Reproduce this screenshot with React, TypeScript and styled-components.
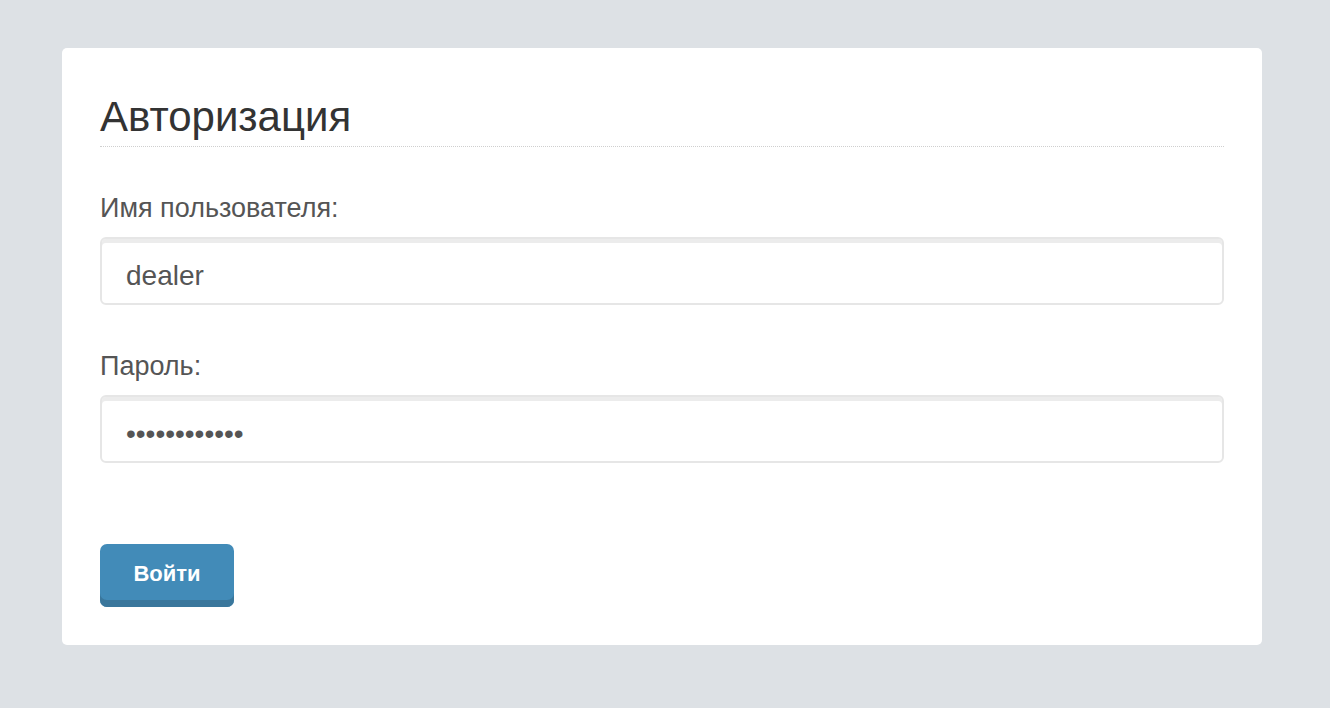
import React from "react";
import styled, { createGlobalStyle } from "styled-components";

const GlobalStyle = createGlobalStyle`
  html, body {
    margin: 0;
    padding: 0;
    background: #dde1e5;
    font-family: "Liberation Sans", Arial, sans-serif;
  }
`;

const Page = styled.div`
  padding: 48px 68px 63px 62px;
`;

const Card = styled.form`
  width: 1200px;
  box-sizing: border-box;
  background: #fff;
  border-radius: 5px;
  padding: 38px;
`;

const Title = styled.h1`
  margin: 8px 0 45px;
  padding-bottom: 6px;
  font-size: 42px;
  line-height: 46px;
  font-weight: 400;
  color: #333;
  border-bottom: 1px dotted #cfcfcf;
`;

const Group = styled.div<{ $last?: boolean }>`
  margin-bottom: ${(p) => (p.$last ? "0" : "45px")};
`;

const Label = styled.label`
  display: block;
  font-size: 27px;
  line-height: 32px;
  color: #555;
  margin-bottom: 13px;
`;

const Field = styled.input`
  display: block;
  width: 100%;
  height: 68px;
  box-sizing: border-box;
  padding: 10px 24px 0;
  border: 2px solid #e6e6e6;
  border-radius: 6px;
  box-shadow: inset 0 4px 0 #ececec;
  font-family: "Liberation Sans", Arial, sans-serif;
  font-size: 28px;
  color: #555;
  outline: none;
`;

const Actions = styled.div`
  padding-top: 81px;
`;

const Button = styled.button`
  display: block;
  width: 134px;
  height: 63px;
  border: none;
  border-radius: 7px;
  background: #428bb8;
  box-shadow: inset 0 -7px 0 #3a779c;
  color: #fff;
  font-family: "Liberation Sans", Arial, sans-serif;
  font-size: 22px;
  font-weight: 700;
  padding: 0 0 4px;
  cursor: pointer;
`;

export default function App() {
  return (
    <Page>
      <GlobalStyle />
      <Card onSubmit={(e) => e.preventDefault()}>
        <Title>Авторизация</Title>
        <Group>
          <Label htmlFor="user">Имя пользователя:</Label>
          <Field id="user" type="text" defaultValue="dealer" />
        </Group>
        <Group $last>
          <Label htmlFor="pass">Пароль:</Label>
          <Field id="pass" type="password" defaultValue="dealer123456" />
        </Group>
        <Actions>
          <Button type="submit">Войти</Button>
        </Actions>
      </Card>
    </Page>
  );
}
